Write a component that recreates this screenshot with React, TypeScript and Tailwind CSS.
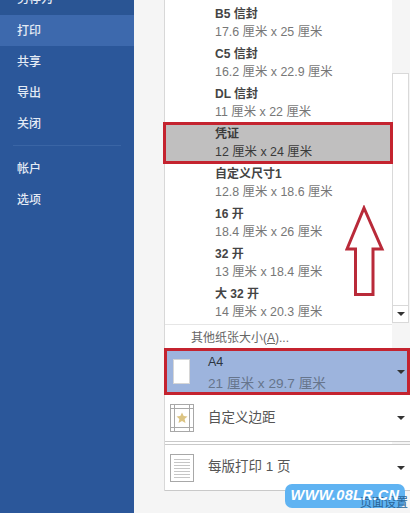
import React from "react";

const navTop = ["打印", "共享", "导出", "关闭"];
const navBottom = ["帐户", "选项"];

const papers = [
  { name: "B5 信封", size: "17.6 厘米 x 25 厘米" },
  { name: "C5 信封", size: "16.2 厘米 x 22.9 厘米" },
  { name: "DL 信封", size: "11 厘米 x 22 厘米" },
  { name: "凭证", size: "12 厘米 x 24 厘米", active: true },
  { name: "自定义尺寸1", size: "12.8 厘米 x 18.6 厘米" },
  { name: "16 开", size: "18.4 厘米 x 26 厘米" },
  { name: "32 开", size: "13 厘米 x 18.4 厘米" },
  { name: "大 32 开", size: "14 厘米 x 20.3 厘米" },
];

function Caret() {
  return <div className="w-0 h-0 border-x-[4px] border-x-transparent border-t-[4px] border-t-[#333]" />;
}

function MarginIcon() {
  return (
    <svg width="24" height="28" viewBox="0 0 24 28" className="shrink-0">
      <rect x="0.5" y="0.5" width="23" height="27" fill="#fff" stroke="#a8a8a8" />
      <path d="M4.5 0v28M19.5 0v28M0 4.5h24M0 23.5h24" stroke="#a8a8a8" fill="none" />
      <path d="M12 8.5l1.7 3.6 3.8.4-2.9 2.6.9 3.9-3.5-2-3.5 2 .9-3.9-2.9-2.6 3.8-.4z" fill="#dcc483" />
    </svg>
  );
}

function PagesIcon() {
  return (
    <svg width="24" height="28" viewBox="0 0 24 28" className="shrink-0">
      <rect x="0.5" y="0.5" width="23" height="27" fill="#fff" stroke="#a8a8a8" />
      <path d="M4 5.5h16M4 8.5h16M4 11.5h16M4 14.5h16M4 17.5h16M4 20.5h16M4 23.5h16" stroke="#c6c6c6" fill="none" />
    </svg>
  );
}

export default function App() {
  return (
    <div
      className="relative w-[410px] h-[513px] overflow-hidden flex items-start bg-[#f5f5f5] text-[#444]"
      style={{ fontFamily: '"Liberation Sans", "Noto Sans CJK SC", sans-serif' }}
    >
      {/* left nav */}
      <div className="w-[134px] h-full shrink-0 bg-[#2b579a] text-[#e4ebf5] text-[12px] font-medium">
        <div className="h-[15px] overflow-hidden bg-[#2a5594]">
          <div className="pl-[17px] -mt-[11px] leading-[20px]">另存为</div>
        </div>
        {navTop.map((item, i) => (
          <div
            key={item}
            className={"h-[31px] pl-[17px] flex items-center " + (i === 0 ? "bg-[#3d69ad]" : "")}
          >
            {item}
          </div>
        ))}
        <div className="mx-[13px] mt-[6px] mb-[7px] h-px bg-[#3a65a5]" />
        {navBottom.map((item) => (
          <div key={item} className="h-[31px] pl-[17px] flex items-center">
            {item}
          </div>
        ))}
      </div>

      <div className="w-[30px] shrink-0" />

      {/* paper panel */}
      <div className="w-[228px] h-[491px] shrink-0 bg-white border-l border-[#d8d8d8] relative">
        <div className="pt-[3px]">
          {papers.map((p) =>
            p.active ? (
              <div key={p.name} className="relative h-[42px] -my-[1px] -ml-[2px] -mr-[1px] pl-[49px] bg-[#c0bfbf] border-[3px] border-[#c4232f] flex flex-col justify-center text-[#3a3a3a]">
                <div className="text-[12px] font-bold leading-[18px]">{p.name}</div>
                <div className="text-[12.4px] leading-[18px]">{p.size}</div>
              </div>
            ) : (
              <div key={p.name} className="h-[40px] pl-[50px] flex flex-col justify-center">
                <div className="text-[12px] font-bold leading-[18px] text-[#444]">{p.name}</div>
                <div className="text-[12.4px] leading-[18px] text-[#777]">{p.size}</div>
              </div>
            )
          )}
        </div>
        <div className="h-px bg-[#e6e6e6] mt-[1px]" />
        <div className="h-[26px] pl-[26px] flex items-center text-[12px] text-[#666]">
          <span>
            其他纸张大小(<span className="underline">A</span>)...
          </span>
        </div>
      </div>

      {/* scrollbar track */}
      <div className="w-[18px] shrink-0">
        <div className="mt-[73px] h-[250px] w-[17px] bg-white border border-[#d9d9d9] flex flex-col justify-end">
          <div className="h-[17px] border-t border-[#d9d9d9] flex items-center justify-center">
            <Caret />
          </div>
        </div>
      </div>

      {/* settings buttons lie across panel and scrollbar column */}
      <div className="absolute left-[164px] top-[348px] w-[246px] flex flex-col">
        <div className="h-[47px] bg-[#9db4dd] border-[3px] border-[#c4232f] flex items-center pr-[2px]">
          <div className="w-[17px] h-[25px] ml-[6px] bg-white border border-[#d6d6d6] shrink-0" />
          <div className="ml-[18px] flex-1 pt-[4px]">
            <div className="text-[12.5px] leading-[16px] text-[#2c3440] -mt-[1px]">A4</div>
            <div className="text-[13.6px] leading-[16px] text-[#66758c] mt-[6px]">21 厘米 x 29.7 厘米</div>
          </div>
          <Caret />
        </div>
        <div className="h-[47px] ml-[1px] bg-white border-b border-[#c9c9c9] flex items-center pl-[5px] pr-[5px]">
          <MarginIcon />
          <div className="ml-[14px] flex-1 text-[13.5px] text-[#555]">自定义边距</div>
          <Caret />
        </div>
        <div className="h-[47px] mt-[2px] ml-[1px] bg-white border-y border-[#c9c9c9] flex items-center pl-[5px] pr-[5px]">
          <PagesIcon />
          <div className="ml-[14px] flex-1 text-[13.5px] text-[#555]">每版打印 1 页</div>
          <Caret />
        </div>
      </div>

      {/* red up arrow */}
      <svg width="40" height="92" viewBox="0 0 40 92" className="absolute left-[345px] top-[205px]">
        <path d="M19 3L37 44H28V89.5H10.5V44H2z" fill="#fff" stroke="#b92a39" strokeWidth="3" />
      </svg>

      {/* watermark: caption runs under the bubble's white text */}
      <div className="absolute left-[285px] top-[484px] w-[120px] h-[24px] rounded-[7px] bg-[#5fb3f2] flex items-center justify-center">
        <div className="absolute left-[75px] top-[12px] text-[12px] leading-[14px] text-[#2a6496] whitespace-nowrap">页面设置</div>
        <span className="relative text-[14.5px] font-bold italic tracking-[0.4px] text-white whitespace-nowrap">WWW.08LR.CN</span>
      </div>
    </div>
  );
}
